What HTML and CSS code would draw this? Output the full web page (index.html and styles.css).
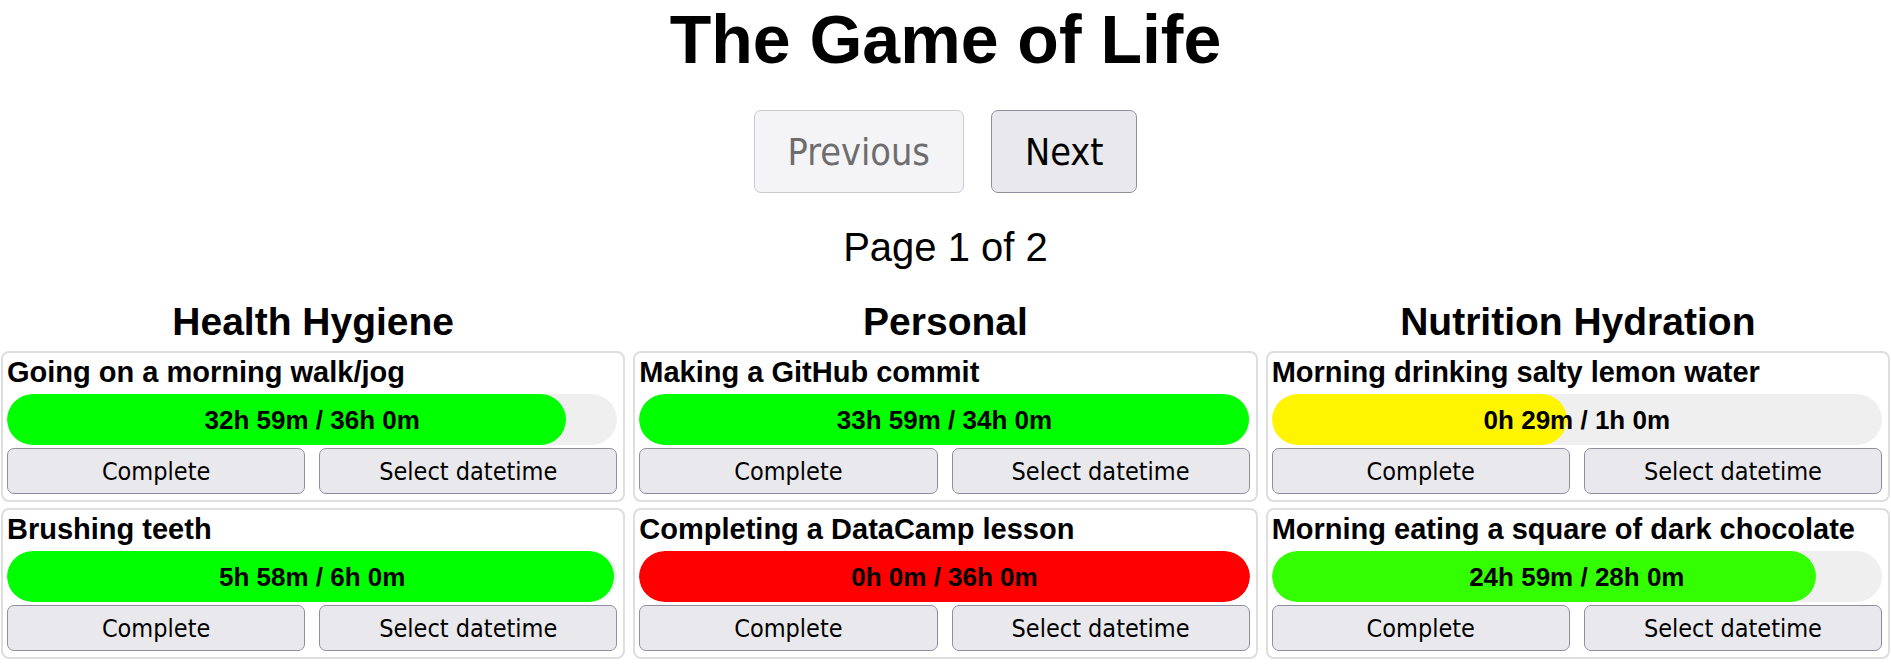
FILE: index.html
```html
<!DOCTYPE html>
<html lang="en">
<head>
<meta charset="utf-8">
<title>The Game of Life</title>
<link rel="stylesheet" href="styles.css">
</head>
<body>
<h1 class="title">The Game of Life</h1>
<div class="pager">
  <button class="pager-btn" disabled>Previous</button>
  <button class="pager-btn">Next</button>
</div>
<p class="page-info">Page 1 of 2</p>
<div class="columns">
  <section class="column">
    <h2 class="column-title">Health Hygiene</h2>
    <div class="card">
      <div class="card-title">Going on a morning walk/jog</div>
      <div class="bar"><div class="fill" style="width:91.6%;background:#00ff00"></div><span class="bar-text">32h 59m / 36h 0m</span></div>
      <div class="actions"><button class="act">Complete</button><button class="act">Select datetime</button></div>
    </div>
    <div class="card">
      <div class="card-title">Brushing teeth</div>
      <div class="bar"><div class="fill" style="width:99.4%;background:#00ff00"></div><span class="bar-text">5h 58m / 6h 0m</span></div>
      <div class="actions"><button class="act">Complete</button><button class="act">Select datetime</button></div>
    </div>
  </section>
  <section class="column">
    <h2 class="column-title">Personal</h2>
    <div class="card">
      <div class="card-title">Making a GitHub commit</div>
      <div class="bar"><div class="fill" style="width:99.95%;background:#00ff00"></div><span class="bar-text">33h 59m / 34h 0m</span></div>
      <div class="actions"><button class="act">Complete</button><button class="act">Select datetime</button></div>
    </div>
    <div class="card">
      <div class="card-title">Completing a DataCamp lesson</div>
      <div class="bar"><div class="fill" style="width:100%;background:#ff0000"></div><span class="bar-text">0h 0m / 36h 0m</span></div>
      <div class="actions"><button class="act">Complete</button><button class="act">Select datetime</button></div>
    </div>
  </section>
  <section class="column">
    <h2 class="column-title">Nutrition Hydration</h2>
    <div class="card">
      <div class="card-title">Morning drinking salty lemon water</div>
      <div class="bar"><div class="fill" style="width:48.4%;background:#fff500"></div><span class="bar-text">0h 29m / 1h 0m</span></div>
      <div class="actions"><button class="act">Complete</button><button class="act">Select datetime</button></div>
    </div>
    <div class="card">
      <div class="card-title">Morning eating a square of dark chocolate</div>
      <div class="bar"><div class="fill" style="width:89.2%;background:#33ff00"></div><span class="bar-text">24h 59m / 28h 0m</span></div>
      <div class="actions"><button class="act">Complete</button><button class="act">Select datetime</button></div>
    </div>
  </section>
</div>
</body>
</html>
```
FILE: styles.css
```css
html, body {
  margin: 0;
  padding: 0;
  background: #ffffff;
}
body {
  font-family: "Liberation Sans", Arial, sans-serif;
  color: #000;
  width: 1891px;
}
.title {
  margin: 0;
  font-size: 68px;
  line-height: 78px;
  font-weight: bold;
  text-align: center;
}
.pager {
  margin-top: 32px;
  display: flex;
  justify-content: center;
  gap: 27px;
}
.pager-btn {
  font-family: "DejaVu Sans Condensed", "DejaVu Sans", sans-serif;
  font-stretch: condensed;
  font-size: 37.5px;
  line-height: 42px;
  height: 83px;
  padding: 0 33px;
  border: 1.7px solid #8f8f9d;
  border-radius: 7px;
  background: #e9e9ed;
  color: #000;
}
.pager-btn:disabled {
  background: #f4f4f6;
  border-color: #cacad2;
  color: #6d6d6d;
}
.page-info {
  margin: 31px 0 0;
  font-size: 40px;
  line-height: 46px;
  text-align: center;
}
.columns {
  margin-top: 29px;
  display: grid;
  grid-template-columns: repeat(3, 1fr);
  column-gap: 8px;
  padding: 0 1px;
}
.column {
  display: flex;
  flex-direction: column;
  gap: 6px;
}
.column-title {
  margin: 0 0 1px;
  font-size: 39px;
  line-height: 45px;
  font-weight: bold;
  text-align: center;
}
.card {
  border: 2px solid #dedede;
  border-radius: 8px;
  padding: 3px 6px 6px 4px;
  display: flex;
  flex-direction: column;
}
.card-title {
  font-size: 29px;
  line-height: 33px;
  font-weight: bold;
  margin-bottom: 5px;
  white-space: nowrap;
}
.bar {
  display: grid;
  height: 51px;
  border-radius: 26px;
  background: #efefef;
  overflow: hidden;
}
.fill {
  grid-area: 1 / 1;
  height: 51px;
  border-radius: 26px;
}
.bar-text {
  grid-area: 1 / 1;
  align-self: center;
  justify-self: center;
  font-size: 26px;
  line-height: 30px;
  font-weight: bold;
}
.actions {
  margin-top: 3px;
  display: flex;
  gap: 14px;
}
.act {
  flex: 1;
  height: 46px;
  padding: 0;
  font-family: "DejaVu Sans Condensed", "DejaVu Sans", sans-serif;
  font-stretch: condensed;
  font-size: 25px;
  color: #000;
  background: #e9e9ed;
  border: 1.7px solid #8f8f9d;
  border-radius: 7px;
}
```
